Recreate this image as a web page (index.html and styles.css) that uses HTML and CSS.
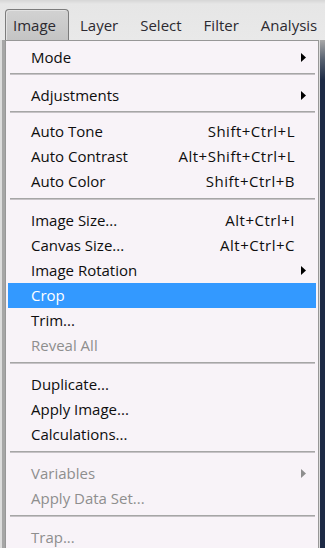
FILE: index.html
```html
<!DOCTYPE html>
<html lang="en">
<head>
    <meta charset="UTF-8">
    <title>Image Menu</title>
    <link rel="stylesheet" href="styles.css">
</head>
<body>
    <div class="menubar">
        <div class="bar-item tab">Image</div>
        <div class="bar-item">Layer</div>
        <div class="bar-item">Select</div>
        <div class="bar-item">Filter</div>
        <div class="bar-item">Analysis</div>
    </div>
    <div class="workspace">
        <div class="edge-left"></div>
        <div class="menu">
            <div class="item">
                <span>Mode</span>
                <svg class="arrow" width="5" height="9" viewBox="0 0 5 9"><path d="M0 0 L5 4.5 L0 9 Z"/></svg>
            </div>
            <div class="sep sep-first"></div>
            <div class="item">
                <span>Adjustments</span>
                <svg class="arrow" width="5" height="9" viewBox="0 0 5 9"><path d="M0 0 L5 4.5 L0 9 Z"/></svg>
            </div>
            <div class="sep sep-tight"></div>
            <div class="item"><span>Auto Tone</span><span class="keys">Shift+Ctrl+L</span></div>
            <div class="item"><span>Auto Contrast</span><span class="keys">Alt+Shift+Ctrl+L</span></div>
            <div class="item"><span>Auto Color</span><span class="keys">Shift+Ctrl+B</span></div>
            <div class="sep"></div>
            <div class="item"><span>Image Size...</span><span class="keys">Alt+Ctrl+I</span></div>
            <div class="item"><span>Canvas Size...</span><span class="keys">Alt+Ctrl+C</span></div>
            <div class="item">
                <span>Image Rotation</span>
                <svg class="arrow" width="5" height="9" viewBox="0 0 5 9"><path d="M0 0 L5 4.5 L0 9 Z"/></svg>
            </div>
            <div class="item active"><span>Crop</span></div>
            <div class="item"><span>Trim...</span></div>
            <div class="item disabled"><span>Reveal All</span></div>
            <div class="sep"></div>
            <div class="item"><span>Duplicate...</span></div>
            <div class="item"><span>Apply Image...</span></div>
            <div class="item"><span>Calculations...</span></div>
            <div class="sep"></div>
            <div class="item disabled">
                <span>Variables</span>
                <svg class="arrow" width="5" height="9" viewBox="0 0 5 9"><path d="M0 0 L5 4.5 L0 9 Z"/></svg>
            </div>
            <div class="item disabled"><span>Apply Data Set...</span></div>
            <div class="sep"></div>
            <div class="item disabled"><span>Trap...</span></div>
        </div>
        <div class="edge-right"></div>
    </div>
</body>
</html>
```

FILE: styles.css
```css
:root {
    --menu-bg: #f8f3f8;
    --text-color: #0e0e0e;
    --disabled-color: #8e8e8e;
    --highlight: #3399ff;
    --border-color: #979797;
}

body {
    margin: 0;
    padding: 0;
    width: 325px;
    height: 548px;
    overflow: hidden;
    font-family: 'Open Sans', sans-serif;
    font-size: 15px;
    color: var(--text-color);
    background-color: #e4e4e4;
}

.menubar {
    height: 40px;
    display: flex;
    align-items: flex-end;
    padding-left: 5px;
    background: linear-gradient(#d6d6d6 0, #e6e6e6 4px, #e9e9e9 100%);
    box-sizing: border-box;
    white-space: nowrap;
}

.bar-item {
    height: 30px;
    line-height: 30px;
    padding: 0 11px;
    color: #2c2a30;
}

.tab {
    padding: 0 12px 0 7px;
    border: 1px solid #7c7c7c;
    border-bottom: none;
    border-radius: 4px 4px 0 0;
    background: linear-gradient(#d2d2d2, #c4c4c4);
    box-shadow: inset 1px 1px 0 #e2e2e2;
}

.workspace {
    display: flex;
    height: 508px;
}

.edge-left {
    width: 5px;
    background: linear-gradient(90deg, #dcdcdc 0, #dcdcdc 2px, #a6a6a6 2px, #a6a6a6 5px);
}

.menu {
    box-sizing: border-box;
    width: 314px;
    border: 1px solid var(--border-color);
    border-bottom: none;
    background-color: var(--menu-bg);
    padding: 4px 2px 0 2px;
}

.edge-right {
    flex: 1;
    border-left: 1px solid #dcdcdc;
    background: linear-gradient(#a9a9a9 0, #56606f 20px, #1d2a45 40px, #1d2a45 100%);
}

.item {
    height: 25px;
    line-height: 25px;
    display: flex;
    align-items: center;
    justify-content: space-between;
    padding: 0 10px 0 23px;
    white-space: nowrap;
}

.item .keys {
    margin-right: 11px;
    letter-spacing: 0.5px;
}

.item .arrow {
    fill: #000;
}

.item.active {
    background-color: var(--highlight);
    color: #fff;
}

.item.disabled {
    color: var(--disabled-color);
}

.item.disabled .arrow {
    fill: var(--disabled-color);
}

.sep {
    height: 0;
    border-top: 1px solid #a6a6a6;
    border-bottom: 1px solid #c6c2c6;
    margin: 4px 1px 8px 2px;
}

.sep-first {
    margin-top: 3px;
}

.sep-tight {
    margin-top: 3px;
    margin-bottom: 6px;
}
```
